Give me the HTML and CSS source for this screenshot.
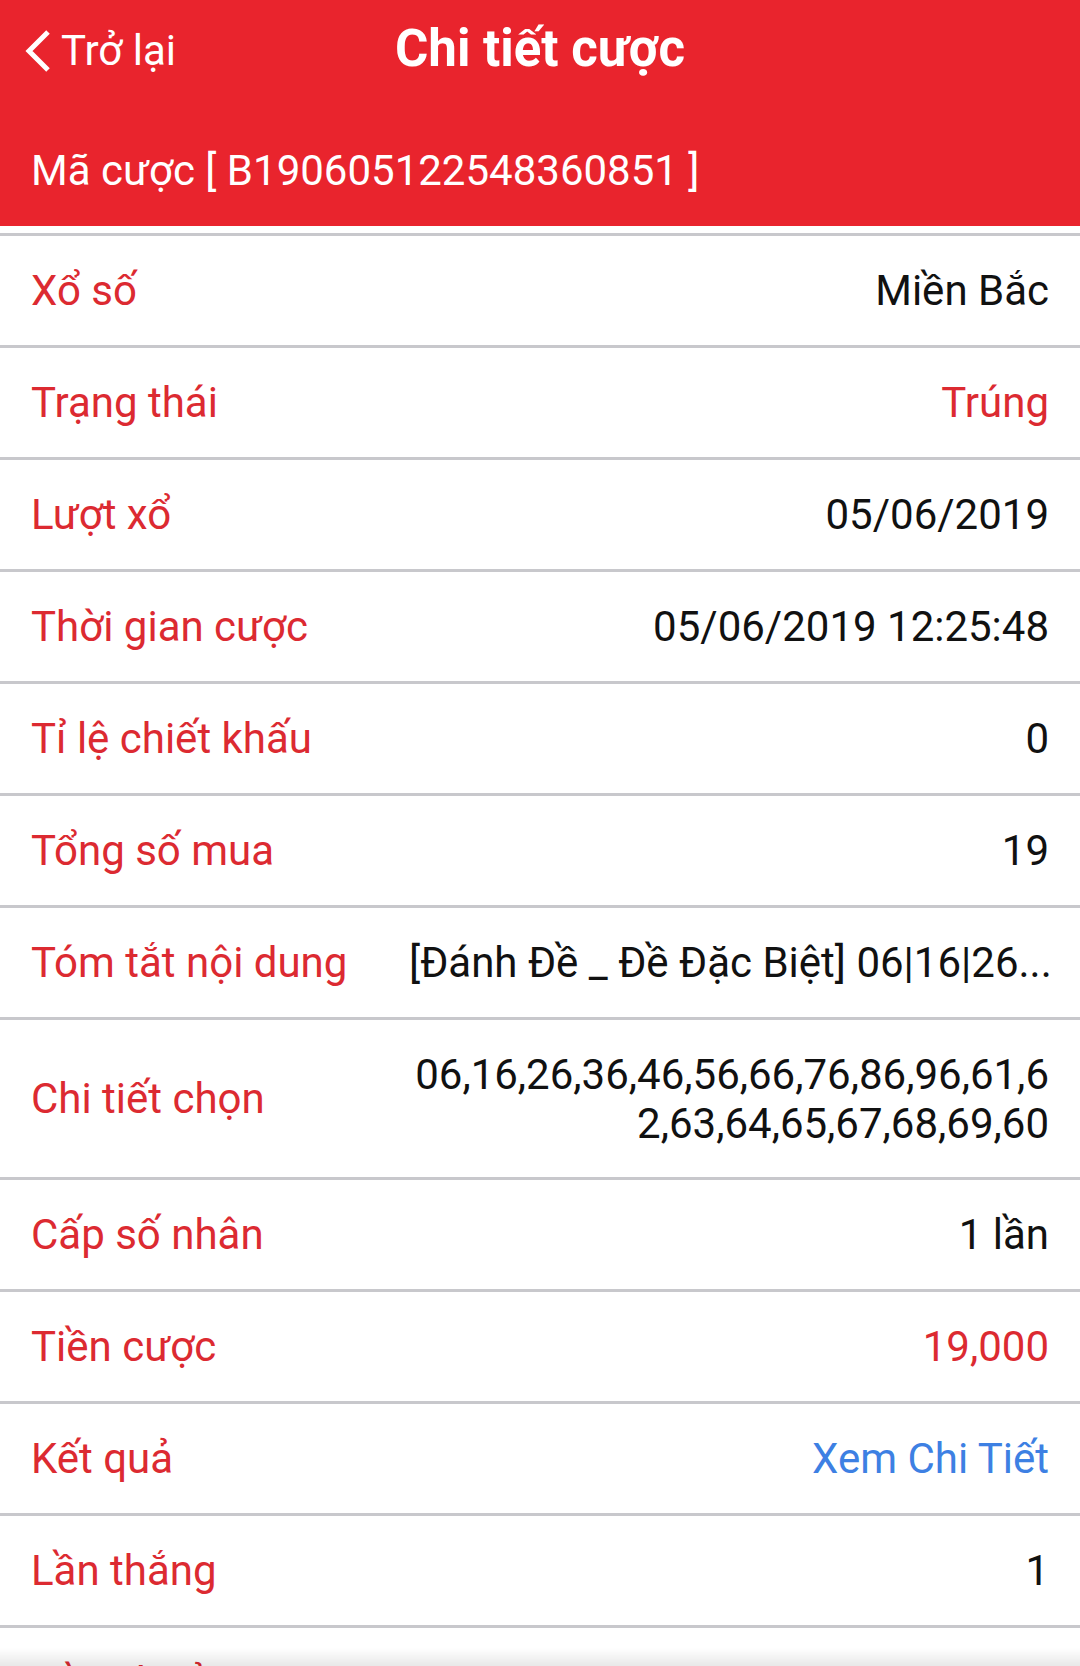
FILE: index.html
```
<!DOCTYPE html>
<html lang="vi">
<head>
    <meta charset="UTF-8">
    <meta name="viewport" content="width=device-width, initial-scale=1.0">
    <title>Chi tiết cược</title>
    <link rel="stylesheet" href="styles.css">
</head>
<body>

    <div class="header">
        <div class="top-bar">
            <a class="back-link" href="#">
                <svg class="back-icon" viewBox="0 0 28 44" width="28" height="44">
                    <path d="M24 3 L5 22 L24 41" fill="none" stroke="#fff" stroke-width="5"/>
                </svg>
                <span>Trở lại</span>
            </a>
            <h1 class="title">Chi tiết cược</h1>
        </div>
        <div class="bet-code">Mã cược [ B190605122548360851 ]</div>
    </div>

    <div class="detail-list">
        <div class="row">
            <div class="label">Xổ số</div>
            <div class="value">Miền Bắc</div>
        </div>
        <div class="row">
            <div class="label">Trạng thái</div>
            <div class="value red">Trúng</div>
        </div>
        <div class="row">
            <div class="label">Lượt xổ</div>
            <div class="value">05/06/2019</div>
        </div>
        <div class="row">
            <div class="label">Thời gian cược</div>
            <div class="value">05/06/2019 12:25:48</div>
        </div>
        <div class="row">
            <div class="label">Tỉ lệ chiết khấu</div>
            <div class="value">0</div>
        </div>
        <div class="row">
            <div class="label">Tổng số mua</div>
            <div class="value">19</div>
        </div>
        <div class="row">
            <div class="label">Tóm tắt nội dung</div>
            <div class="value nowrap">[Đánh Đề _ Đề Đặc Biệt] 06|16|26...</div>
        </div>
        <div class="row tall">
            <div class="label">Chi tiết chọn</div>
            <div class="value wrap">06,16,26,36,46,56,66,76,86,96,61,62,63,64,65,67,68,69,60</div>
        </div>
        <div class="row">
            <div class="label">Cấp số nhân</div>
            <div class="value">1 lần</div>
        </div>
        <div class="row">
            <div class="label">Tiền cược</div>
            <div class="value red">19,000</div>
        </div>
        <div class="row">
            <div class="label">Kết quả</div>
            <div class="value"><a class="link" href="#">Xem Chi Tiết</a></div>
        </div>
        <div class="row">
            <div class="label">Lần thắng</div>
            <div class="value">1</div>
        </div>
        <div class="row">
            <div class="label">Tiền thưởng</div>
            <div class="value red">19,000</div>
        </div>
    </div>

    <div class="bottom-shade"></div>

</body>
</html>
```

FILE: styles.css
```
body {
    margin: 0;
    font-family: Roboto, "Noto Sans", sans-serif;
    background: #fff;
    overflow: hidden;
}

.header {
    background-color: #e9242d;
    color: #fff;
    height: 226px;
    border-bottom: 7px solid #fff;
}

.top-bar {
    position: relative;
    height: 96px;
    display: flex;
    align-items: center;
    justify-content: center;
}

.back-link {
    position: absolute;
    left: 24px;
    top: 26px;
    display: flex;
    align-items: center;
    gap: 9px;
    color: #fff;
    text-decoration: none;
    font-size: 42px;
}

.title {
    margin: 0;
    font-size: 51px;
    font-weight: bold;
}

.bet-code {
    padding: 50px 0 0 31px;
    font-size: 42px;
}

.detail-list {
    border-top: 3px solid #c8c8cc;
}

.row {
    display: flex;
    justify-content: space-between;
    align-items: center;
    height: 109px;
    padding: 0 31px 0 31px;
    border-bottom: 3px solid #c8c8cc;
    font-size: 42px;
}

.row.tall {
    height: 157px;
}

.label {
    color: #dc2a31;
    white-space: nowrap;
}

.value {
    color: #111;
    text-align: right;
    max-width: 640px;
}

.value.red {
    color: #dc2a31;
}

.value.nowrap {
    white-space: nowrap;
}

.value.wrap {
    word-break: break-all;
    line-height: 49px;
}

.link {
    color: #3d80e3;
    text-decoration: none;
}

.bottom-shade {
    position: fixed;
    left: 0;
    right: 0;
    bottom: 0;
    height: 18px;
    background: linear-gradient(to bottom, rgba(0, 0, 0, 0), rgba(0, 0, 0, 0.09));
}
```
